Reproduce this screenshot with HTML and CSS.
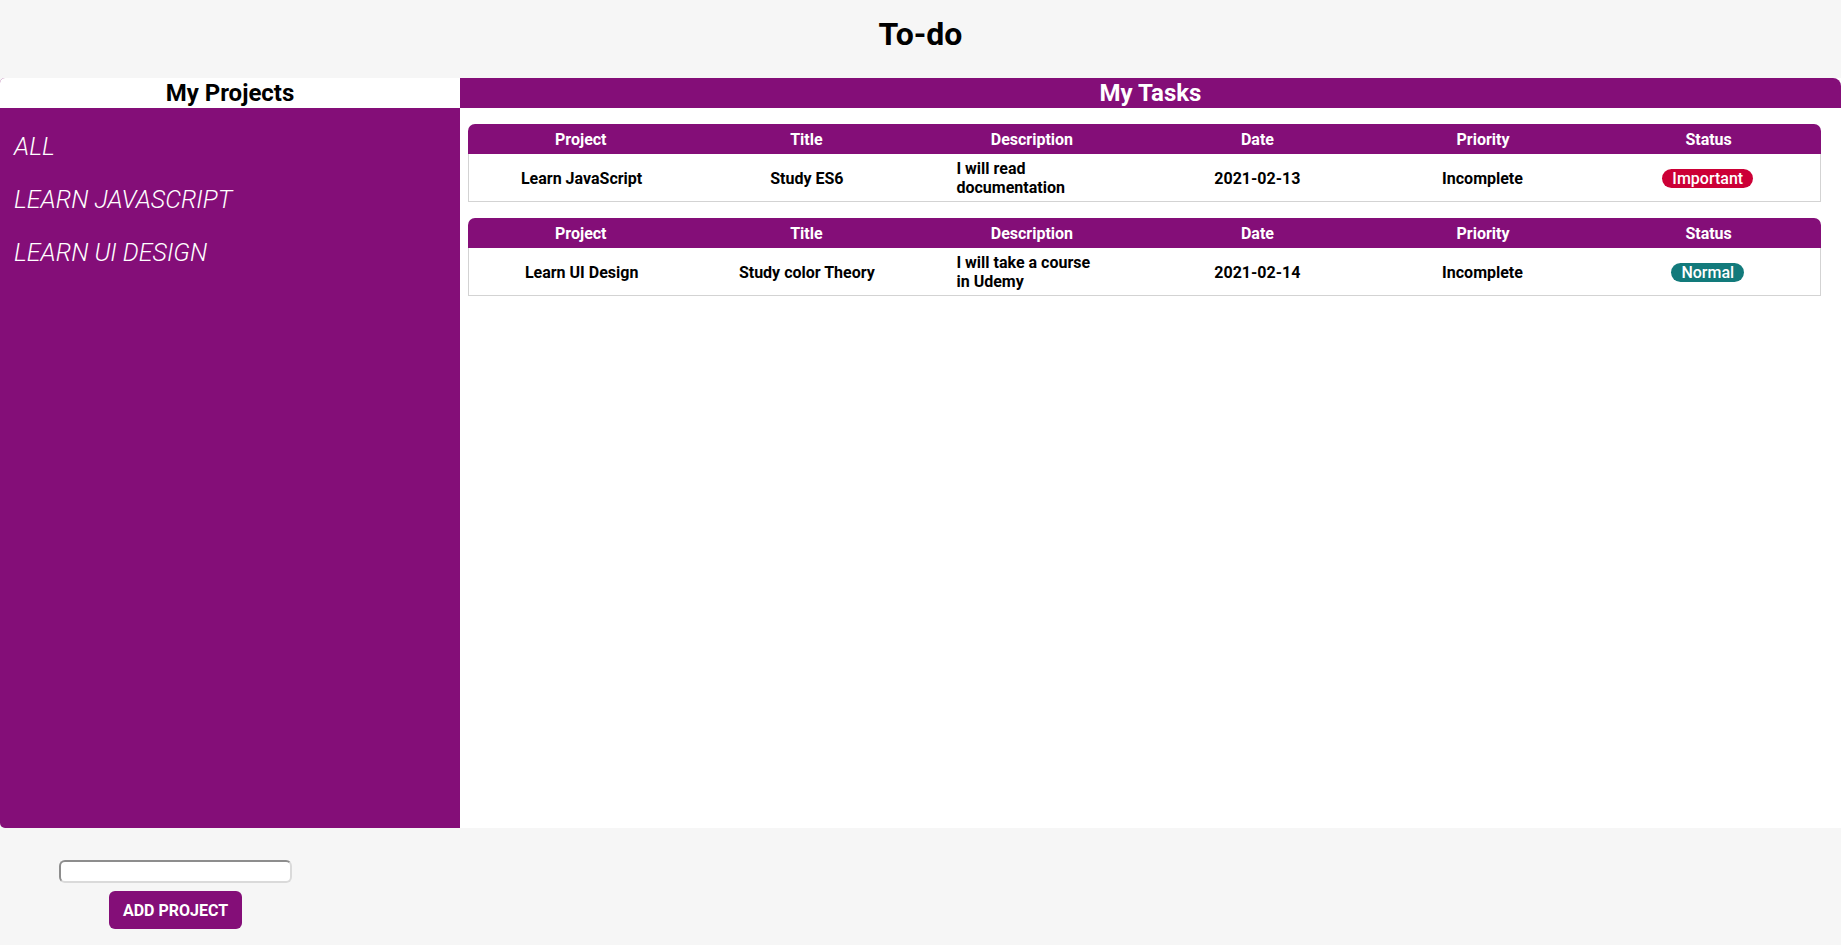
FILE: index.html
```html
<!DOCTYPE html>
<html lang="en">
<head>
<meta charset="utf-8">
<title>To-do</title>
<link rel="stylesheet" href="styles.css">
</head>
<body>
  <h1 class="page-title">To-do</h1>
  <main class="board">
    <aside class="projects">
      <h2 class="projects-head">My Projects</h2>
      <ul class="project-list">
        <li class="project-item">All</li>
        <li class="project-item">Learn JavaScript</li>
        <li class="project-item">Learn UI Design</li>
      </ul>
    </aside>
    <section class="tasks">
      <h2 class="tasks-head">My Tasks</h2>
      <div class="task-list">
        <div class="task">
          <div class="task-row task-row-head">
            <div class="cell">Project</div>
            <div class="cell">Title</div>
            <div class="cell">Description</div>
            <div class="cell">Date</div>
            <div class="cell">Priority</div>
            <div class="cell">Status</div>
          </div>
          <div class="task-row task-row-body">
            <div class="cell">Learn JavaScript</div>
            <div class="cell">Study ES6</div>
            <div class="cell cell-desc"><span class="desc-text">I will read documentation</span></div>
            <div class="cell">2021-02-13</div>
            <div class="cell">Incomplete</div>
            <div class="cell"><span class="badge badge-important">Important</span></div>
          </div>
        </div>
        <div class="task">
          <div class="task-row task-row-head">
            <div class="cell">Project</div>
            <div class="cell">Title</div>
            <div class="cell">Description</div>
            <div class="cell">Date</div>
            <div class="cell">Priority</div>
            <div class="cell">Status</div>
          </div>
          <div class="task-row task-row-body">
            <div class="cell">Learn UI Design</div>
            <div class="cell">Study color Theory</div>
            <div class="cell cell-desc"><span class="desc-text">I will take a course in Udemy</span></div>
            <div class="cell">2021-02-14</div>
            <div class="cell">Incomplete</div>
            <div class="cell"><span class="badge badge-normal">Normal</span></div>
          </div>
        </div>
      </div>
    </section>
  </main>
  <form class="add-project">
    <input class="add-input" type="text">
    <button class="add-btn" type="button">ADD PROJECT</button>
  </form>
</body>
</html>
```

FILE: styles.css
```css
* { box-sizing: border-box; }

body {
  margin: 0;
  background: #f6f6f6;
  font-family: Roboto, "Liberation Sans", sans-serif;
  color: #000;
}

.page-title {
  margin: 15px 0 25px;
  font-size: 32px;
  line-height: 38px;
  font-weight: 700;
  text-align: center;
}

.board {
  display: grid;
  grid-template-columns: 460px 1fr;
  height: 750px;
}

.projects {
  background: #840e78;
  border-radius: 5px 0 0 5px;
  overflow: hidden;
}

.projects-head {
  margin: 0;
  height: 30px;
  background: #fff;
  color: #000;
  font-size: 24px;
  line-height: 30px;
  font-weight: 700;
  text-align: center;
}

.project-list {
  list-style: none;
  margin: 0;
  padding: 25px 0 0 14px;
}

.project-item {
  color: #fff;
  font-size: 25px;
  font-weight: 300;
  font-style: italic;
  text-transform: uppercase;
  line-height: 28px;
  margin-bottom: 25px;
}

.tasks {
  background: #fff;
}

.tasks-head {
  margin: 0;
  height: 30px;
  background: #840e78;
  color: #fff;
  border-radius: 0 8px 0 0;
  font-size: 24px;
  line-height: 30px;
  font-weight: 700;
  text-align: center;
}

.task-list {
  padding-top: 16px;
  display: flex;
  flex-direction: column;
  gap: 16px;
}

.task {
  width: 98%;
  margin-left: 8px;
}

.task-row {
  display: grid;
  grid-template-columns: repeat(6, 1fr);
  align-items: center;
  font-size: 16px;
  font-weight: 700;
  line-height: 19px;
}

.task-row-head {
  height: 30px;
  background: #840e78;
  color: #fff;
  border-radius: 7px 7px 0 0;
}

.task-row-body {
  height: 48px;
  border: 1px solid #d3d3d3;
  border-top: 0;
  padding-top: 1px;
}

.cell {
  text-align: center;
}

.cell-desc {
  text-align: left;
}

.desc-text {
  display: block;
  width: 142px;
  margin-left: 37px;
}

.badge {
  display: inline-block;
  padding: 0 10px;
  border-radius: 10px;
  color: #fff;
  font-weight: 500;
  line-height: 19px;
}

.badge-important { background: #cc0036; }
.badge-normal { background: #127a7b; }

.add-project {
  width: 351px;
  margin-top: 32px;
  display: flex;
  flex-direction: column;
  align-items: center;
  gap: 8px;
}

.add-input {
  width: 233px;
  height: 23px;
  border-style: solid;
  border-width: 2px;
  border-color: #8d8d8d #dadada #dadada #8d8d8d;
  border-radius: 6px;
  background: #fff;
  padding: 1px 6px;
  font-family: inherit;
}

.add-btn {
  padding: 0 14px;
  height: 38px;
  border: 0;
  border-radius: 6px;
  background: #840e78;
  color: #fff;
  font-family: inherit;
  font-size: 16px;
  font-weight: 700;
  cursor: pointer;
}
```
